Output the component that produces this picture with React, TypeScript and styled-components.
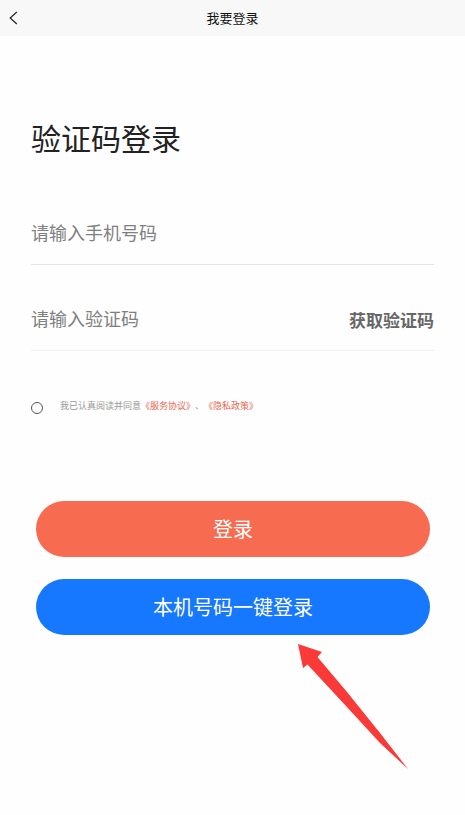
import { useState } from 'react';
import styled, { createGlobalStyle } from 'styled-components';

const GlobalStyle = createGlobalStyle`
  * { box-sizing: border-box; }
  body {
    margin: 0;
    background: #fefefe;
    color: #222;
    font-family: "Noto Sans CJK SC", "Noto Sans", sans-serif;
    text-spacing-trim: space-all;
  }
  button, input { font-family: inherit; }
`;

const Header = styled.header`
  display: grid;
  grid-template-columns: 36px 1fr 36px;
  align-items: center;
  height: 36px;
  background: #f8f8f8;
`;

const BackButton = styled.button`
  display: flex;
  align-items: center;
  height: 36px;
  padding: 0 0 0 9px;
  border: 0;
  background: none;
  color: #222;
  cursor: pointer;
`;

const HeaderTitle = styled.h1`
  margin: 0;
  font-size: 13px;
  line-height: 20px;
  font-weight: 400;
  text-align: center;
  color: #111;
`;

const Form = styled.form`
  display: flex;
  flex-direction: column;
  padding: 80px 31px 0;
`;

const Title = styled.h2`
  margin: 0 0 50px;
  font-size: 30px;
  line-height: 42px;
  font-weight: 400;
  color: #222;
`;

const Field = styled.div<{ $line: string }>`
  display: flex;
  align-items: center;
  height: 57px;
  padding-bottom: 8px;
  border-bottom: 1px solid ${(p) => p.$line};

  & + & { margin-top: 29px; }
`;

const TextInput = styled.input`
  flex: 1;
  min-width: 0;
  height: 48px;
  padding: 0;
  border: 0;
  outline: 0;
  background: none;
  font-size: 18px;
  color: #222;

  &::placeholder { color: #808080; opacity: 1; }
`;

const CodeButton = styled.button`
  padding: 4px 0 0;
  border: 0;
  background: none;
  font-size: 17px;
  line-height: 24px;
  font-weight: 700;
  color: #666;
  cursor: pointer;
`;

const Agreement = styled.div`
  display: flex;
  align-items: center;
  gap: 17px;
  margin-top: 47px;
  font-size: 9px;
  line-height: 16px;
  color: #999;
`;

const Radio = styled.input`
  appearance: none;
  flex: none;
  width: 12px;
  height: 12px;
  margin: 4px 0 0;
  border: 1px solid #555;
  border-radius: 50%;

  &:checked { background: #f76b51; border-color: #f76b51; }
`;

const PolicyLink = styled.a`
  color: #e8674f;
  text-decoration: none;
`;

const Actions = styled.div`
  display: flex;
  flex-direction: column;
  gap: 22px;
  margin: 87px 4px 0 5px;
`;

const PillButton = styled.button<{ $fill: string }>`
  height: 56px;
  border: 0;
  border-radius: 28px;
  background: ${(p) => p.$fill};
  font-size: 20px;
  line-height: 28px;
  color: #fff;
  cursor: pointer;
`;

const ArrowRow = styled.div`
  display: flex;
  justify-content: flex-end;
  padding: 9px 25px 0 0;
`;

const Arrow = styled.svg`
  display: block;
  flex: none;
  width: 111px;
  height: 127px;
`;

export default function App() {
  const [agreed, setAgreed] = useState(false);

  return (
    <>
      <GlobalStyle />
      <Header>
        <BackButton type="button" aria-label="返回">
          <svg width="9" height="14" viewBox="0 0 9 14" fill="none" stroke="currentColor" strokeWidth="1.2">
            <path d="M7.8 1 1.2 7l6.6 6" />
          </svg>
        </BackButton>
        <HeaderTitle>我要登录</HeaderTitle>
      </Header>
      <Form onSubmit={(e) => e.preventDefault()}>
        <Title>验证码登录</Title>
        <Field $line="#e3e3e3">
          <TextInput type="tel" placeholder="请输入手机号码" aria-label="手机号码" />
        </Field>
        <Field $line="#f0f0f0">
          <TextInput inputMode="numeric" placeholder="请输入验证码" aria-label="验证码" />
          <CodeButton type="button">获取验证码</CodeButton>
        </Field>
        <Agreement>
          <Radio id="agree" type="radio" checked={agreed} onChange={() => setAgreed(true)} />
          <div>
            <label htmlFor="agree">我已认真阅读并同意</label>
            <PolicyLink href="#service">《服务协议》</PolicyLink>、
            <PolicyLink href="#privacy">《隐私政策》</PolicyLink>
          </div>
        </Agreement>
        <Actions>
          <PillButton type="submit" $fill="#f76b51">登录</PillButton>
          <PillButton type="button" $fill="#1677ff">本机号码一键登录</PillButton>
        </Actions>
        <ArrowRow>
          <Arrow viewBox="0 0 111 127" aria-hidden="true">
            <path
              d="M0 0 L24 8 L19.5 13 L49 48 L82 89 L110 125 L82 99 L60 75 L9.5 20.5 L5 24 Z"
              fill="#f93a38"
            />
          </Arrow>
        </ArrowRow>
      </Form>
    </>
  );
}
